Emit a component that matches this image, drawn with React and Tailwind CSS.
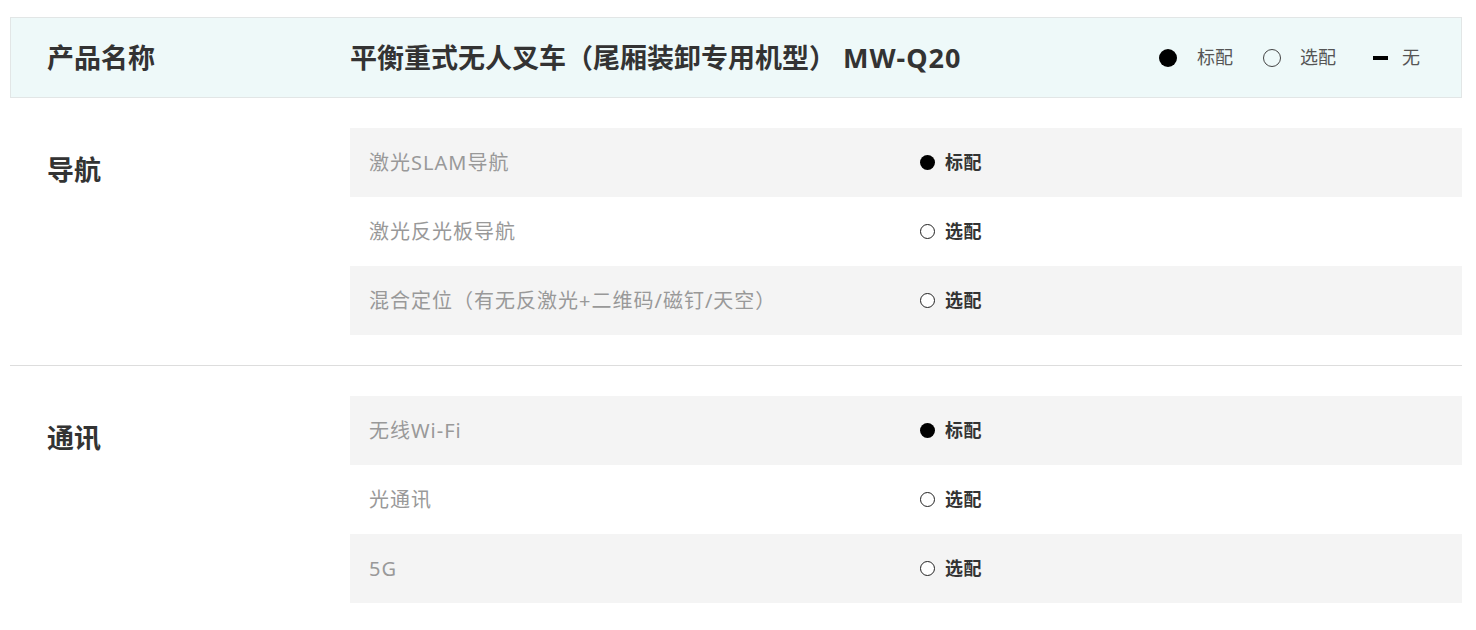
const FONT = { fontFamily: '"Noto Sans", "Noto Sans CJK SC", sans-serif' };

const sections = [
  {
    name: '导航',
    items: [
      { label: '激光SLAM导航', type: 'std' },
      { label: '激光反光板导航', type: 'opt' },
      { label: '混合定位（有无反激光+二维码/磁钉/天空）', type: 'opt' },
    ],
  },
  {
    name: '通讯',
    items: [
      { label: '无线Wi-Fi', type: 'std' },
      { label: '光通讯', type: 'opt' },
      { label: '5G', type: 'opt' },
    ],
  },
];

const Dot = ({ filled, size = 'w-[15px] h-[15px]' }) =>
  filled ? (
    <span className={`${size} rounded-full bg-black shrink-0`} />
  ) : (
    <span className={`${size} rounded-full border border-[#222] bg-white shrink-0`} />
  );

const Mark = ({ type }) => (
  <div className="flex items-center gap-[10px]">
    <Dot filled={type === 'std'} />
    <span className="text-[18px] font-bold text-[#333] tracking-[0.5px]">
      {type === 'std' ? '标配' : '选配'}
    </span>
  </div>
);

const App = () => {
  return (
    <div className="w-[1476px] min-h-[630px] bg-white pl-[10px] pr-[14px] pt-[17px]" style={FONT}>
      {/* header */}
      <div className="h-[81px] flex items-center bg-[#eef9f9] border border-[#e2e6e6]">
        <div className="w-[339px] pl-[36px] pt-[2px] text-[27px] font-bold text-[#333]">产品名称</div>
        <div className="flex-1 pt-[2px] text-[27px] font-bold text-[#333]">
          平衡重式无人叉车（尾厢装卸专用机型） <span className="tracking-[1px]">MW-Q20</span>
        </div>
        <div className="flex items-center pr-[41px] text-[18px] text-[#555]">
          <Dot filled size="w-[18px] h-[18px]" />
          <span className="ml-[20px]">标配</span>
          <span className="ml-[30px] w-[18px] h-[18px] rounded-full border border-[#444]" />
          <span className="ml-[19px]">选配</span>
          <span className="ml-[37px] w-[15px] h-[4px] bg-black" />
          <span className="ml-[14px]">无</span>
        </div>
      </div>

      {sections.map((s, si) => (
        <div
          key={s.name}
          className={`flex pt-[30px] pb-[30px] ${si === 0 ? 'border-b border-[#dddddd]' : ''}`}
        >
          <div className="w-[340px] pl-[37px] pt-[22px] text-[27px] leading-[39px] font-bold text-[#333]">
            {s.name}
          </div>
          <div className="flex-1 flex flex-col">
            {s.items.map((it, i) => (
              <div
                key={it.label}
                className={`h-[69px] flex items-center ${i % 2 === 0 ? 'bg-[#f4f4f4]' : 'bg-white'}`}
              >
                <div className="w-[570px] pl-[19px] text-[20px] text-[#999] tracking-[1px]">{it.label}</div>
                <Mark type={it.type} />
              </div>
            ))}
          </div>
        </div>
      ))}
    </div>
  );
};

export default App;
